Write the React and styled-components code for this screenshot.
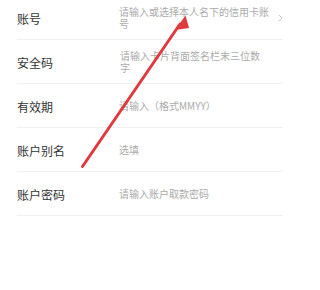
import React from "react";
import styled, { createGlobalStyle } from "styled-components";

const Global = createGlobalStyle`
  html, body { margin: 0; padding: 0; background: #ffffff; }
  body { font-family: "Noto Sans CJK SC", "Noto Sans", sans-serif; }
`;

const Page = styled.div`
  position: relative;
  width: 300px;
  height: 290px;
  overflow: hidden;
  background: #ffffff;
  padding: 0 17px;
  box-sizing: border-box;
`;

const List = styled.div`
  display: flex;
  flex-direction: column;
  margin-top: -4px;
`;

const Row = styled.div`
  display: flex;
  align-items: center;
  height: 43px;
  border-bottom: 1px solid #f0f0f0;
`;

const Label = styled.div`
  flex: 0 0 102px;
  font-size: 12px;
  line-height: 14px;
  color: #333333;
  padding-top: 2px;
`;

const Value = styled.div`
  width: ${(p) => p.$w}px;
  font-size: 10px;
  line-height: 12px;
  color: #ababab;
  word-break: break-all;
  padding-left: ${(p) => p.$shift || 0}px;
`;

const Chevron = styled.svg`
  margin-left: auto;
  width: 5px;
  height: 8px;
  flex: 0 0 auto;
`;

const ArrowLayer = styled.svg`
  position: absolute;
  left: 0;
  top: 0;
  width: 300px;
  height: 290px;
  pointer-events: none;
`;

const rows = [
  { label: "账号", value: "请输入或选择本人名下的信用卡账号", w: 152, chevron: true },
  { label: "安全码", value: "请输入卡片背面签名栏末三位数字", w: 145, shift: 1 },
  { label: "有效期", value: "请输入（格式MMYY）", w: 160 },
  { label: "账户别名", value: "选填", w: 160 },
  { label: "账户密码", value: "请输入账户取款密码", w: 160 },
];

export default function App() {
  return (
    <>
      <Global />
      <Page>
        <List>
          {rows.map((r) => (
            <Row key={r.label}>
              <Label>{r.label}</Label>
              <Value $w={r.w} $shift={r.shift}>{r.value}</Value>
              {r.chevron && (
                <Chevron viewBox="0 0 5 8">
                  <path d="M1 1 L4 4 L1 7" fill="none" stroke="#c4c4c4" strokeWidth="1" />
                </Chevron>
              )}
            </Row>
          ))}
        </List>
        <ArrowLayer viewBox="0 0 300 290">
          <line x1="82.5" y1="166.5" x2="180" y2="24" stroke="#e03a3e" strokeWidth="3" strokeLinecap="round" />
          <polygon points="185.5,15.5 175,30 189,28" fill="#e03a3e" />
        </ArrowLayer>
      </Page>
    </>
  );
}
